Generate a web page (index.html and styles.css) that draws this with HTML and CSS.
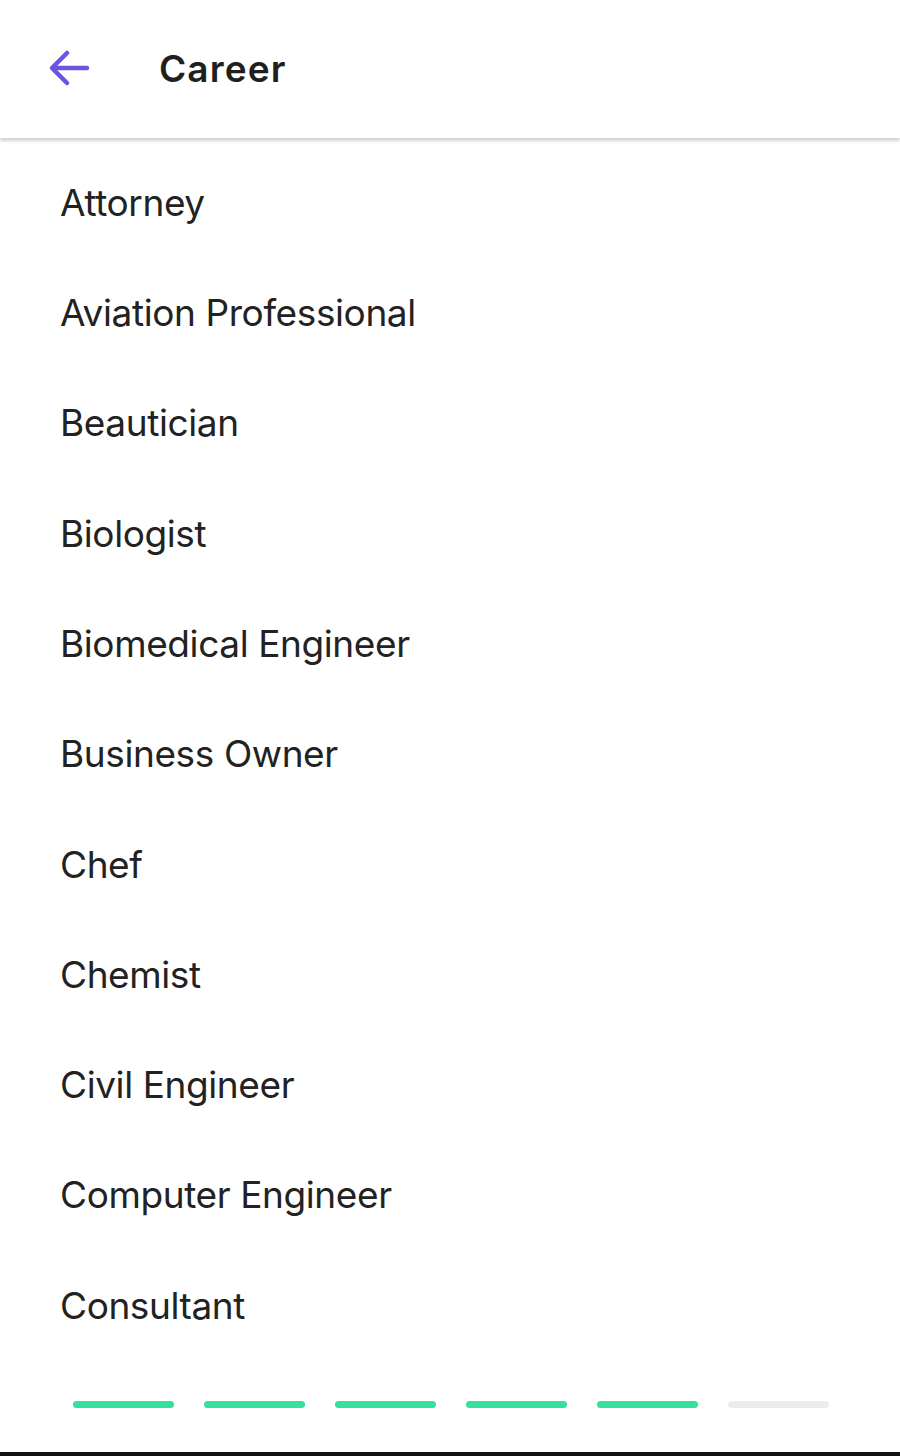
FILE: index.html
```html
<!DOCTYPE html>
<html>
<head>
<meta charset="utf-8">
<link rel="stylesheet" href="styles.css">
</head>
<body>
<div class="screen">
  <header class="header">
    <svg class="back" width="44" height="40" viewBox="0 0 44 40">
      <path d="M40 20 H6 M20 5 L5 20 L20 35" fill="none" stroke="#6a55e0" stroke-width="4.5" stroke-linecap="round" stroke-linejoin="round"/>
    </svg>
    <h1 class="title">Career</h1>
  </header>
  <ul class="list">
    <li class="item">Attorney</li>
    <li class="item">Aviation Professional</li>
    <li class="item">Beautician</li>
    <li class="item">Biologist</li>
    <li class="item">Biomedical Engineer</li>
    <li class="item">Business Owner</li>
    <li class="item">Chef</li>
    <li class="item">Chemist</li>
    <li class="item">Civil Engineer</li>
    <li class="item">Computer Engineer</li>
    <li class="item">Consultant</li>
  </ul>
  <div class="progress">
    <span class="dash on"></span>
    <span class="dash on"></span>
    <span class="dash on"></span>
    <span class="dash on"></span>
    <span class="dash on"></span>
    <span class="dash"></span>
  </div>
  <div class="bottom-bar"></div>
</div>
</body>
</html>
```
FILE: styles.css
```css
html, body {
  margin: 0;
  padding: 0;
  background: #fff;
}
.screen {
  width: 900px;
  height: 1456px;
  display: flex;
  flex-direction: column;
  font-family: Inter, "Noto Sans", sans-serif;
  color: #222;
  overflow: hidden;
}
.header {
  height: 138px;
  flex: none;
  display: flex;
  align-items: center;
  padding-left: 47px;
  box-sizing: border-box;
  background: #fff;
  box-shadow: 0 3px 3px rgba(0,0,0,0.18);
  position: relative;
  z-index: 1;
}
.back {
  display: block;
  margin-top: -2px;
}
.title {
  margin: 0 0 0 68px;
  font-size: 37px;
  line-height: 1.21;
  font-weight: 600;
  color: #1f1f1f;
  letter-spacing: 1.1px;
}
.list {
  list-style: none;
  margin: 0;
  padding: 10px 0 0 0;
}
.item {
  height: 110.3px;
  display: flex;
  align-items: center;
  padding-left: 60px;
  font-size: 37px;
  line-height: 1.21;
  letter-spacing: -0.4px;
  color: #222;
}
.progress {
  display: flex;
  gap: 30px;
  padding-left: 73px;
  margin-top: 40px;
}
.dash {
  width: 101px;
  height: 7px;
  border-radius: 4px;
  background: #ececec;
}
.dash.on {
  background: #34e09b;
}
.bottom-bar {
  margin-top: auto;
  height: 4px;
  background: #111;
}
```
